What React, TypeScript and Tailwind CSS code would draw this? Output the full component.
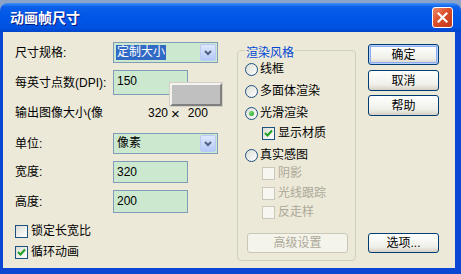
import clsx from "clsx"

const font = "font-['Liberation_Sans','Noto_Sans_CJK_SC',sans-serif]"

function Tick() {
    return (
        <svg width="9" height="9" viewBox="0 0 9 9">
            <polyline points="1,4 3.5,6.5 8,1.5" fill="none" stroke="#21a121" strokeWidth="2" />
        </svg>
    )
}

function Check({ checked, disabled, label }: { checked?: boolean; disabled?: boolean; label: string }) {
    return (
        <div className="flex items-center h-[16px]">
            <span className={clsx("w-[13px] h-[13px] border flex items-center justify-center",
                disabled ? "border-[#cac8bb] bg-[#f7f6f0]" : "border-[#1c5180] bg-[linear-gradient(135deg,#dcdcd7,#ffffff)]")}>
                {checked && <Tick />}
            </span>
            <span className={clsx("ml-[3px]", disabled ? "text-[#aca899]" : "text-black")}>{label}</span>
        </div>
    )
}

function Radio({ checked, label }: { checked?: boolean; label: string }) {
    return (
        <div className="flex items-center h-[16px]">
            <span className="w-[13px] h-[13px] rounded-full border border-[#1c5180] bg-[linear-gradient(135deg,#dcdcd7,#ffffff)] flex items-center justify-center">
                {checked && <span className="w-[5px] h-[5px] rounded-full bg-[radial-gradient(circle_at_35%_35%,#6fd96f,#21a121)]" />}
            </span>
            <span className="ml-[2px]">{label}</span>
        </div>
    )
}

function Combo({ value, selected }: { value: string; selected?: boolean }) {
    return (
        <div className="w-[105px] h-[21px] border border-[#7f9db9] bg-[#cce8cf] flex items-center p-[1px]">
            <div className="flex-1 h-full flex items-center pl-[1px]">
                <span className={clsx("leading-[15px] px-[1px]", selected && "bg-[#316ac5] text-white")}>{value}</span>
            </div>
            <div className="w-[16px] h-[17px] rounded-[2px] border border-[#b9cbf4] bg-[linear-gradient(180deg,#dfe8fd,#b4c9f6)] flex items-center justify-center">
                <svg width="8" height="6" viewBox="0 0 8 6">
                    <polyline points="1,1 4,4 7,1" fill="none" stroke="#4d6185" strokeWidth="2" />
                </svg>
            </div>
        </div>
    )
}

function Field({ value, h }: { value: string; h: string }) {
    return (
        <div className={clsx("w-[75px] border border-[#7f9db9] bg-[#cce8cf] pl-[3px] pt-[1px]", h)}>{value}</div>
    )
}

function XpButton({ label, main, disabled, w = "w-[71px]", h = "h-[21px]" }:
    { label: string; main?: boolean; disabled?: boolean; w?: string; h?: string }) {
    return (
        <div className={clsx("rounded-[3px] border flex items-center justify-center", w, h,
            disabled ? "border-[#c9c7ba] bg-[#f5f4ea] text-[#aca899]"
                : "border-[#003c74] bg-[linear-gradient(180deg,#ffffff,#f0f0ea_70%,#d6d0c5)] text-black",
            main && "shadow-[inset_0_0_0_1px_#b9d1fa,inset_0_0_0_2px_#8caef0]")}>
            {label}
        </div>
    )
}

function AnimFrameSizeDialog() {
    return (
        <div className={clsx("w-[461px] h-[274px] bg-[#8ba2c9] pt-[3px] text-[12px] text-black", font)}>
            <div className="h-[271px] rounded-t-[8px] overflow-hidden flex flex-col">
                {/* title bar */}
                <div className="h-[29px] shrink-0 flex items-center pl-[10px] pr-[8px] bg-[linear-gradient(180deg,#3f90f8_0%,#0a5ee9_14%,#0056e6_50%,#0052e0_85%,#0044c8_100%)]">
                    <span className="text-white font-bold text-[14px] [text-shadow:1px_1px_0_#0a1883] font-['Noto_Sans_CJK_SC',sans-serif]">动画帧尺寸</span>
                    <div className="ml-auto w-[21px] h-[21px] rounded-[3px] border border-white bg-[linear-gradient(135deg,#f08b6b,#dc4e2b_45%,#c0371a)] flex items-center justify-center">
                        <svg width="11" height="11" viewBox="0 0 11 11">
                            <path d="M1.5 1.5 L9.5 9.5 M9.5 1.5 L1.5 9.5" stroke="white" strokeWidth="2.2" strokeLinecap="square" />
                        </svg>
                    </div>
                </div>

                {/* body */}
                <div className="flex-1 border-l-[3px] border-r-[6px] border-b-[6px] border-[#0a48d4] bg-[#ece9d8]">
                    <div className="relative flex h-full pl-[12px] pt-[10px]">
                        {/* left column */}
                        <div className="w-[222px] flex flex-col">
                            <div className="flex items-center h-[21px]">
                                <span className="w-[98px]">尺寸规格:</span>
                                <Combo value="定制大小" selected />
                            </div>
                            <div className="flex items-center h-[25px] mt-[7px]">
                                <span className="w-[98px]">每英寸点数(DPI):</span>
                                <Field value="150" h="h-[25px]" />
                            </div>
                            <div className="flex items-center h-[16px] mt-[10px]">
                                <span className="w-[133px]">输出图像大小(像</span>
                                <span>320</span>
                                <span className="ml-[3px] text-[15px] leading-none">×</span>
                                <span className="ml-[8px]">200</span>
                            </div>
                            <div className="flex items-center h-[21px] mt-[12px]">
                                <span className="w-[98px]">单位:</span>
                                <Combo value="像素" />
                            </div>
                            <div className="flex items-center h-[22px] mt-[7px]">
                                <span className="w-[98px]">宽度:</span>
                                <Field value="320" h="h-[22px]" />
                            </div>
                            <div className="flex items-center h-[23px] mt-[7px]">
                                <span className="w-[98px]">高度:</span>
                                <Field value="200" h="h-[23px]" />
                            </div>
                            <div className="mt-[10px]">
                                <Check label="锁定长宽比" />
                            </div>
                            <div className="mt-[5px]">
                                <Check label="循环动画" checked />
                            </div>
                        </div>

                        {/* render style group */}
                        <div className="relative w-[119px] h-[211px] mt-[8px] border border-[#d0d0bf] rounded-[4px] flex flex-col pl-[7px] pt-[10px]">
                            <span className="absolute -top-[7px] left-[7px] px-[1px] bg-[#ece9d8] text-[#0046d5]">渲染风格</span>
                            <Radio label="线框" />
                            <div className="mt-[6px]"><Radio label="多面体渲染" /></div>
                            <div className="mt-[6px]"><Radio checked label="光滑渲染" /></div>
                            <div className="mt-[4px] ml-[17px]"><Check checked label="显示材质" /></div>
                            <div className="mt-[6px]"><Radio label="真实感图" /></div>
                            <div className="mt-[2px] ml-[17px]"><Check disabled label="阴影" /></div>
                            <div className="mt-[4px] ml-[17px]"><Check disabled label="光线跟踪" /></div>
                            <div className="mt-[3px] ml-[17px]"><Check disabled label="反走样" /></div>
                            <div className="mt-[13px] ml-[2px]">
                                <XpButton label="高级设置" disabled w="w-[101px]" h="h-[20px]" />
                            </div>
                        </div>

                        {/* buttons */}
                        <div className="ml-[12px] mt-[2px] flex flex-col">
                            <XpButton label="确定" main />
                            <div className="mt-[5px]"><XpButton label="取消" /></div>
                            <div className="mt-[4px]"><XpButton label="帮助" /></div>
                            <div className="mt-auto mb-[15px]"><XpButton label="选项..." h="h-[20px]" /></div>
                        </div>

                        {/* floating gray swatch over the dpi field */}
                        <div className="absolute left-[167px] top-[51px] w-[52px] h-[23px] bg-[#c0c0c0] border-2 border-t-[#f4f3ee] border-l-[#f4f3ee] border-b-[#808080] border-r-[#808080] shadow-[0_0_0_1px_#d4d0c8]" />
                    </div>
                </div>
            </div>
        </div>
    )
}

export default function App() {
    return <AnimFrameSizeDialog />
}
